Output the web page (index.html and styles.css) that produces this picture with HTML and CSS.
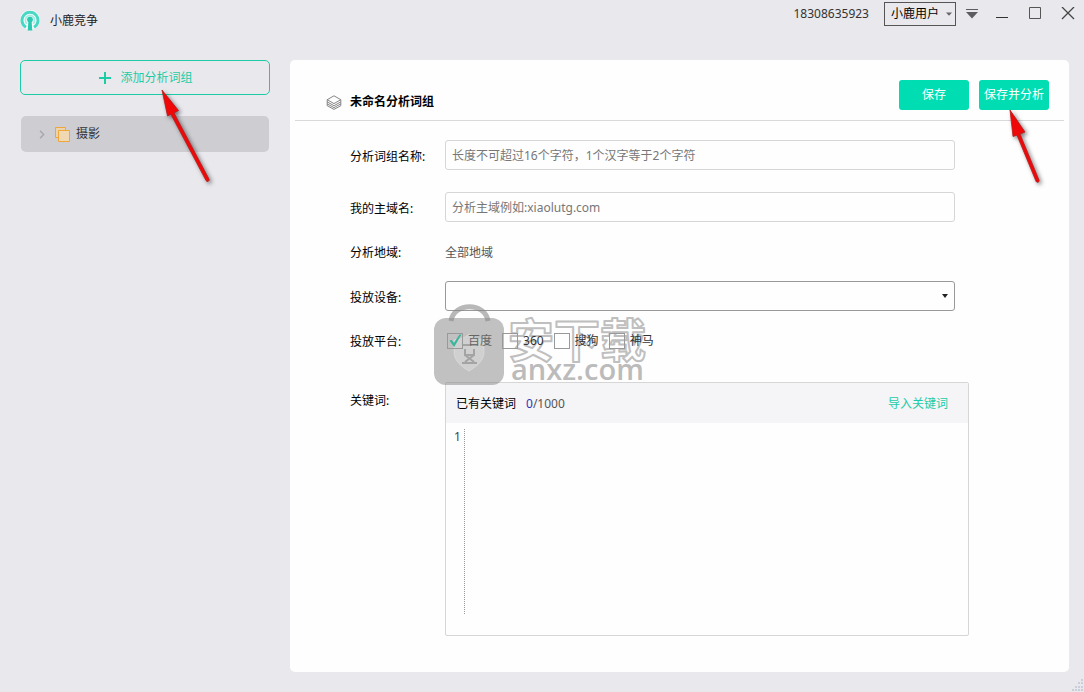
FILE: index.html
```html
<!DOCTYPE html>
<html lang="zh-CN">
<head>
<meta charset="utf-8">
<title>小鹿竞争</title>
<link rel="stylesheet" href="styles.css">
</head>
<body>
<div class="app">
  <header class="titlebar">
    <div class="brand">
      <svg class="brand-logo" width="20" height="22" viewBox="0 0 20 22" aria-hidden="true">
        <circle cx="10" cy="10" r="10" fill="#fbfefe"/>
        <path d="M6 17.2A8 8 0 1 1 14 17.2" fill="none" stroke="#48d8c4" stroke-width="3"/>
        <path d="M7 13.6a4.6 4.6 0 1 1 6 0" fill="none" stroke="#a9ece1" stroke-width="1.8"/>
        <circle cx="10" cy="9.6" r="2.9" fill="#2bc9b0"/>
        <path d="M8.5 10h3l.8 10.4H7.700z" fill="#2bc9b0"/>
      </svg>
      <span class="brand-name">小鹿竞争</span>
    </div>
    <div class="account">
      <span class="phone">18308635923</span>
      <button class="user-menu" type="button">小鹿用户
        <svg width="6" height="4" viewBox="0 0 6 4" aria-hidden="true"><path d="M0 .5h6L3 3.7z" fill="#666"/></svg>
      </button>
      <button class="win-btn win-menu" type="button" aria-label="菜单">
        <svg width="12" height="10" viewBox="0 0 12 10"><path d="M0 .5h12" stroke="#5b5b60"/><path d="M0 3h12L6 9.5z" fill="#5b5b60"/></svg>
      </button>
      <button class="win-btn" type="button" aria-label="最小化">
        <svg width="14" height="14" viewBox="0 0 14 14"><path d="M1 10.500h12" stroke="#333"/></svg>
      </button>
      <button class="win-btn" type="button" aria-label="最大化">
        <svg width="14" height="14" viewBox="0 0 14 14"><path d="M1.500 .500h11v11h-11z" fill="none" stroke="#555"/></svg>
      </button>
      <button class="win-btn" type="button" aria-label="关闭">
        <svg width="14" height="14" viewBox="0 0 14 14"><path d="M1 0l12 12M13 0L1 12" stroke="#444" stroke-width="1.3"/></svg>
      </button>
    </div>
  </header>

  <aside class="sidebar">
    <div class="pointer-anchor">
      <button class="add-group" type="button">
        <svg width="12" height="12" viewBox="0 0 12 12" aria-hidden="true"><path d="M6 0v12M0 6h12" stroke="#1ccca6" stroke-width="2"/></svg>
        添加分析词组
      </button>
      <svg class="pointer pointer-add" width="60" height="100" viewBox="0 0 60 100" aria-hidden="true">
        <path d="M2 0L18.500 20.500 14 23 49 89a1.600 1.600 0 0 1-3 1.500L11 24.500 7.500 26z" fill="#f00808" stroke="#b51c1c" stroke-width=".8"/>
      </svg>
    </div>
    <button class="group-item" type="button">
      <svg width="6" height="9" viewBox="0 0 6 9" aria-hidden="true"><path d="M1 .8l3.700 3.700L1 8.200" fill="none" stroke="#a5a5aa" stroke-width="1.3"/></svg>
      <svg class="group-icon" width="15" height="15" viewBox="0 0 15 15" aria-hidden="true"><path d="M3.500 10.500h-3V.5h10v3" fill="#ecd3ad" stroke="#efa63a"/><path d="M3.500 3.500h11v11h-11z" fill="#f0d8b3" stroke="#efa63a"/></svg>
      摄影
    </button>
  </aside>

  <main class="panel">
    <div class="panel-head">
      <svg class="layers" width="16" height="15" viewBox="0 0 16 15" aria-hidden="true">
        <g fill="none" stroke="#777" stroke-width=".9"><path d="M8 .8l6.800 3.900L8 8.600 1.200 4.700z"/><path d="M1.200 4.700v2.200L8 10.700l6.800-3.800V4.700M1.200 6.900v2L8 12.600l6.800-3.700v-2M1.200 8.900v1.800L8 14.400l6.800-3.700V8.900"/></g>
      </svg>
      <h1 class="panel-title">未命名分析词组</h1>
      <div class="actions">
        <button class="primary" type="button">保存</button>
        <div class="pointer-anchor">
          <button class="primary" type="button">保存并分析</button>
          <svg class="pointer pointer-save" width="44" height="84" viewBox="0 0 44 84" aria-hidden="true">
            <path d="M2 0L17 22 12 24 31 70a1.600 1.600 0 0 1-3 1.300L9 25.200 5 26.500z" fill="#f00808" stroke="#b51c1c" stroke-width=".8"/>
          </svg>
        </div>
      </div>
    </div>

    <form class="form">
      <div class="row row-tall">
        <label class="label" for="group-name">分析词组名称:</label>
        <input class="field" id="group-name" type="text" placeholder="长度不可超过16个字符，1个汉字等于2个字符">
      </div>
      <div class="row row-tall">
        <label class="label" for="domain">我的主域名:</label>
        <input class="field" id="domain" type="text" placeholder="分析主域例如:xiaolutg.com">
      </div>
      <div class="row">
        <span class="label">分析地域:</span>
        <span class="value">全部地域</span>
      </div>
      <div class="row row-tall">
        <label class="label" for="device">投放设备:</label>
        <div class="select-wrap">
          <select class="field select" id="device"><option></option></select>
          <svg class="caret" width="6" height="4" viewBox="0 0 6 4" aria-hidden="true"><path d="M0 0h6L3 4z" fill="#222"/></svg>
        </div>
      </div>
      <div class="row">
        <span class="label">投放平台:</span>
        <div class="platforms">
          <svg class="stamp" width="216" height="84" viewBox="0 0 216 84" aria-hidden="true">
            <path d="M17 18C20 -1 51 -1 54 18" fill="none" stroke="#888" stroke-opacity=".6" stroke-width="5"/>
            <rect x="0" y="15" width="70" height="67" rx="12" fill="#888" fill-opacity=".52"/>
            <path d="M35 31C31 35 26 36 20 37v12c0 9 8 15 15 19 7-4 15-10 15-19V37c-6-1-11-2-15-6z" fill="#e6e6e6" fill-opacity=".4" stroke="#e6e6e6" stroke-opacity=".5"/>
            <path d="M28 42h15M31 46v6h9v-6M31 52l9 7M40 52l-9 7M28 60h15" fill="none" stroke="#999" stroke-opacity=".8" stroke-width="2"/>
            <text class="stamp-cn" x="74" y="54">安下载</text>
            <text class="stamp-en" x="77" y="77">anxz.com</text>
          </svg>
          <label class="check check-on"><input type="checkbox" checked>百度</label>
          <label class="check"><input type="checkbox">360</label>
          <label class="check"><input type="checkbox">搜狗</label>
          <label class="check"><input type="checkbox">神马</label>
        </div>
      </div>
      <div class="row row-keywords">
        <label class="label" for="keywords">关键词:</label>
        <div class="keywords">
          <div class="keywords-head">
            <span>已有关键词</span>
            <span class="count"><span class="count-now">0</span>/1000</span>
            <a class="import" href="#">导入关键词</a>
          </div>
          <div class="editor">
            <span class="line-no">1</span>
            <textarea class="editor-text" id="keywords"></textarea>
          </div>
        </div>
      </div>
    </form>
  </main>
  <svg class="grip" width="12" height="14" viewBox="0 0 12 14" aria-hidden="true"><path d="M9 1h2v2H9zM6 4h2v2H6zM9 4h2v2H9zM3 8h2v2H3zM6 8h2v2H6zM9 8h2v2H9zM0 11h2v2H0zM3 11h2v2H3zM6 11h2v2H6zM9 11h2v2H9z" fill="#c9cedb"/></svg>
</div>
</body>
</html>
```
FILE: styles.css
```css
* { box-sizing: border-box; }

body {
  margin: 0;
  background: #e9e8ed;
  color: #000;
  font: 12px/16px "Noto Sans", "Noto Sans CJK SC", sans-serif;
}

button, input, select, textarea { font: inherit; color: inherit; }
button { padding: 0; border: 0; background: none; cursor: pointer; }

.app {
  position: relative;
  display: grid;
  grid-template-columns: 250px 1fr;
  grid-template-rows: 60px 1fr;
  column-gap: 20px;
  min-height: 100vh;
  padding: 0 15px 20px 20px;
}

/* Title bar */
.titlebar {
  grid-column: 1 / -1;
  display: flex;
  justify-content: space-between;
  align-items: flex-start;
  margin-right: -15px;
}
.brand { display: flex; align-items: center; gap: 10px; padding-top: 10px; color: #222; }
.account { display: flex; align-items: center; height: 28px; color: #333; }
.phone { margin-right: 15px; }
.user-menu {
  display: flex;
  align-items: center;
  justify-content: space-between;
  width: 72px;
  height: 24px;
  margin-right: 10px;
  padding: 0 3px 0 6px;
  border: 1px solid #555;
  color: #000;
}
.win-btn { display: flex; width: 33px; justify-content: center; }
.win-menu { width: 12px; margin-right: 7px; }

/* Sidebar */
.add-group {
  display: flex;
  align-items: center;
  justify-content: center;
  gap: 9px;
  width: 100%;
  height: 35px;
  padding: 1px 0 0 2px;
  border: 1px solid #1ccca6;
  border-radius: 5px;
  color: #1ccca6;
}
.group-item {
  display: flex;
  align-items: center;
  width: 248px;
  height: 36px;
  margin: 21px 1px 0;
  padding-left: 18px;
  border-radius: 5px;
  background: #cecdd2;
  color: #333;
}
.group-icon { margin: 0 6px 0 10px; }

.pointer-anchor { position: relative; }
.pointer {
  position: absolute;
  z-index: 2;
  pointer-events: none;
  filter: drop-shadow(2px 2px 2px rgba(0, 0, 0, .5));
}
.pointer-add { left: 140px; top: 30px; }
.pointer-save { left: 29px; top: 30px; }

/* Main panel */
.panel {
  display: flex;
  flex-direction: column;
  min-width: 0;
  border-radius: 5px;
  background: #fefefe;
}
.panel-head {
  display: flex;
  align-items: flex-end;
  height: 61px;
  margin: 0 5px;
  padding: 0 15px 10px 31px;
  border-bottom: 1px solid #d9d9d9;
}
.panel-title { margin: 0 0 0 8px; font-size: 12px; line-height: 16px; font-weight: 700; }
.actions { display: flex; gap: 10px; margin-left: auto; }
.primary {
  display: block;
  width: 70px;
  height: 30px;
  border-radius: 3px;
  background: #00ddb3;
  color: #fff;
}

.form {
  flex: 1;
  display: flex;
  flex-direction: column;
  padding: 8px 100px 36px 60px;
}
.row {
  display: grid;
  grid-template-columns: 95px 1fr;
  align-items: center;
  min-height: 37px;
}
.row-tall { min-height: 52px; }
.label { padding-top: 3px; }
.value { padding-top: 2px; color: #555; }
.field {
  width: calc(100% - 14px);
  height: 30px;
  padding: 0 6px;
  border: 1px solid #d6d6d6;
  border-radius: 3px;
  background: #fefefe;
}
.field::placeholder { color: #777; opacity: 1; }
.select-wrap { position: relative; }
.select { display: block; appearance: none; border-color: #999; }
.caret { position: absolute; right: 21px; top: 13px; pointer-events: none; }

.platforms {
  position: relative;
  display: flex;
  gap: 10px;
  padding-left: 2px;
  color: #333;
}
.check { position: relative; display: flex; align-items: center; gap: 5px; }
.check-on { color: #666; }
.check input {
  appearance: none;
  width: 16px;
  height: 16px;
  margin: 0;
  border: 1px solid #999;
}
.check input:checked::before {
  content: "";
  display: block;
  height: 14px;
  background: #3bb59c;
  clip-path: polygon(10% 50%, 28% 46%, 42% 68%, 82% 8%, 96% 8%, 44% 96%);
}
.stamp { position: absolute; left: -11px; top: -30px; overflow: visible; pointer-events: none; }
.stamp-cn {
  font: 700 46px "Noto Sans CJK SC", sans-serif;
  fill: #fff;
  fill-opacity: .2;
  stroke: #aaa;
  stroke-opacity: .75;
  stroke-width: 2;
  stroke-linejoin: round;
}
.stamp-en { font: 600 29px "Open Sans", sans-serif; fill: #bbb; }

.row-keywords { flex: 1; align-items: stretch; margin-top: 23px; }
.row-keywords .label { padding-top: 11px; }
.keywords {
  display: flex;
  flex-direction: column;
  min-height: 254px;
  border: 1px solid #d6d6d6;
  border-radius: 2px;
}
.keywords-head {
  display: flex;
  align-items: center;
  gap: 10px;
  height: 40px;
  padding: 2px 20px 0 10px;
  background: #f5f4f7;
}
.count { color: #555; }
.count-now { color: #3030c0; }
.import { margin-left: auto; color: #1ccca6; text-decoration: none; }
.editor { flex: 1; display: flex; padding: 6px 8px 21px; color: #444; }
.line-no { width: 11px; border-right: 1px dotted #999; }
.editor-text {
  flex: 1;
  padding: 0 5px;
  border: 0;
  outline: 0;
  background: transparent;
  resize: none;
}
.grip { position: absolute; right: 0; bottom: 0; }
```
